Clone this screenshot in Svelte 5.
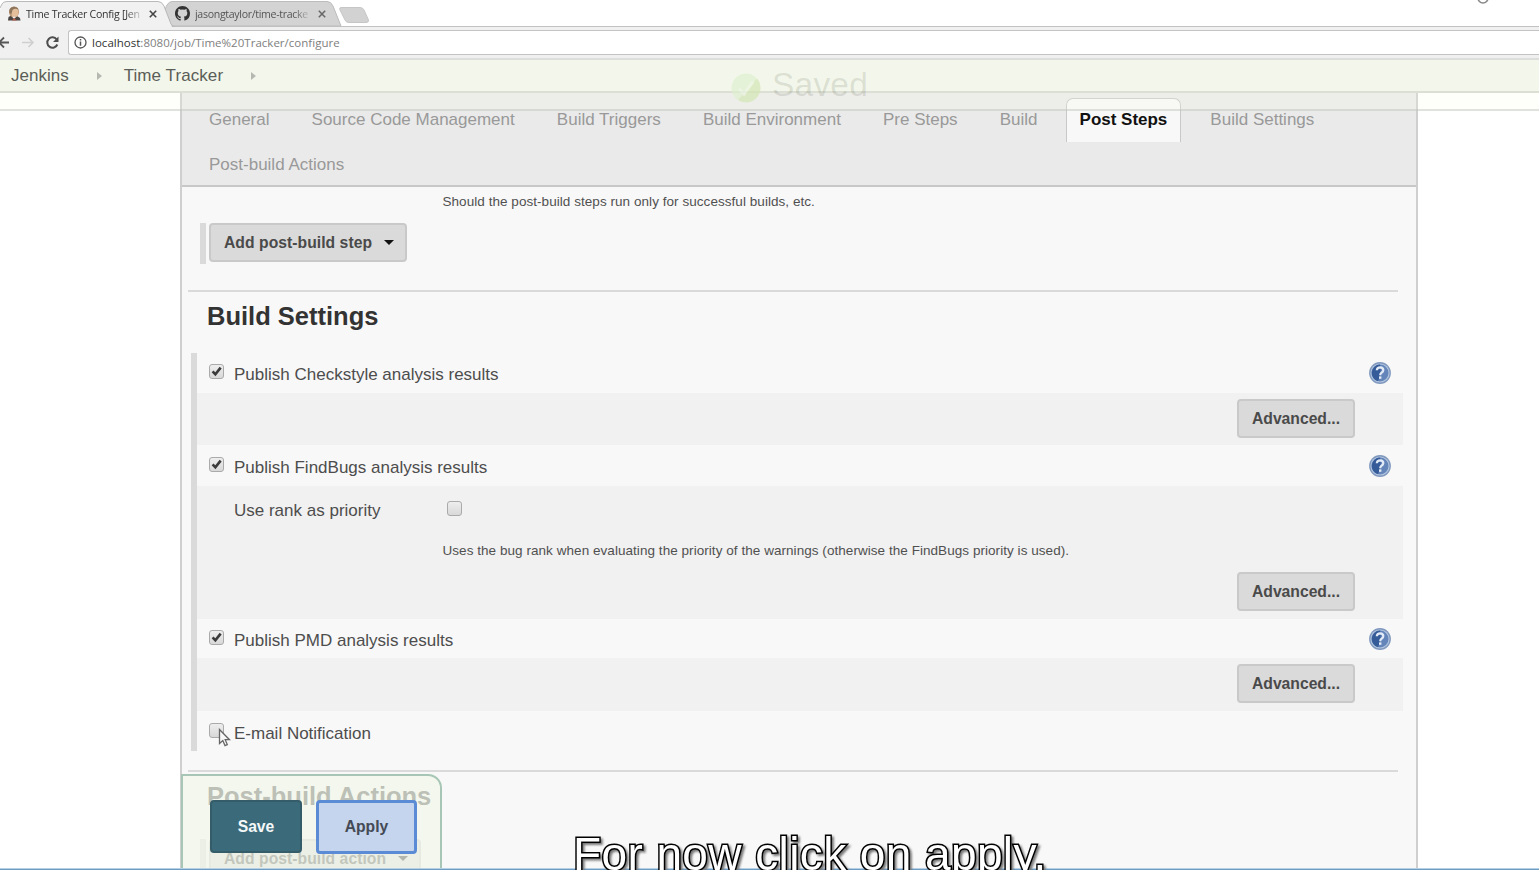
<script>
  const tabs = ['General', 'Source Code Management', 'Build Triggers', 'Build Environment', 'Pre Steps', 'Build', 'Post Steps', 'Build Settings', 'Post-build Actions'];
</script>

{#snippet check(on)}
  <span class="check">
    {#if on}
      <svg viewBox="0 0 15 15"><path d="M3 7.300 6.200 10.800 12.300 3" fill="none" stroke="#3a3a3a" stroke-width="3" /></svg>
    {/if}
  </span>
{/snippet}

{#snippet help()}
  <svg class="help" viewBox="0 0 22 22">
    <circle cx="11" cy="11" r="10.900" fill="#7f98bd" />
    <circle cx="11" cy="11" r="9.600" fill="#b4c6e0" />
    <circle cx="11" cy="11" r="8.500" fill="#6485b9" />
    <path d="M11 2.500A8.500 8.500 0 0 0 9 19.200Q13 11 11 2.500Z" fill="#355b98" />
    <path d="M7.800 8.300Q8 5.300 11.200 5.300 14.400 5.500 14.300 8.200 14.200 9.700 12.500 10.700 11.200 11.500 11.200 13.200" fill="none" stroke="#e3ebf7" stroke-width="2.200" />
    <rect x="10" y="14.400" width="2.400" height="2.400" fill="#e3ebf7" />
  </svg>
{/snippet}

<div class="screen">
  <div class="strip">
    <svg class="shapes" width="1539" height="27" viewBox="0 0 1539 27">
      <path d="M0 26.5H1539" stroke="#c2c2c2" />
      <path d="M171 26 165 10Q167 2 172 1.5H327Q331 1.5 333 6L341 26Z" fill="#d3d3d3" stroke="#bcbcbc" />
      <path d="M341 7.500H360Q363 7.500 364 10L368.500 20Q369 22.500 366 22.500H349Q346 22.500 345 20L340 10Q339 7.500 341 7.500Z" fill="#d2d2d2" stroke="#c6c6c6" />
      <path d="M0 27V10L2 4Q3 1.500 7 1.500H158Q162 1.500 164 6L172 27Z" fill="#f1f1f1" />
      <path d="M0 8 2 4Q3 1.500 7 1.500H158Q162 1.500 164 6L171 24Q172 26.500 175 26.500" fill="none" stroke="#b9b9b9" />
      <circle cx="1483" cy="-2" r="5" fill="none" stroke="#888" stroke-width="1.600" />
    </svg>
    <div class="tab first">
      <svg width="14" height="15" viewBox="0 0 14 15">
        <path d="M1 14.500 1.500 11 5 9 10 10 13 12 13.500 14.500Z" fill="#4a4644" />
        <ellipse cx="7" cy="6" rx="5" ry="5.500" fill="#b5916f" />
        <ellipse cx="7.800" cy="6.600" rx="3.600" ry="4.500" fill="#e3bf9c" />
        <path d="M2.500 7Q1.500 1.500 6.500 .7 10.500 .5 11.500 3.500 8 2 5.500 4L4.500 8Z" fill="#8e765d" />
        <path d="M5 10.500 7 13 9 11" fill="#eee" /><path d="M7 12 10 14.500H5Z" fill="#b5604c" />
      </svg>
      <span class="title t1">Time Tracker Config [Jen</span>
      <svg class="x" width="8" height="8" viewBox="0 0 8 8"><path d="M.8.8 7.200 7.200M7.200.8.8 7.200" stroke="#444" stroke-width="1.600" /></svg>
    </div>
    <div class="tab second">
      <svg width="15" height="15" viewBox="0 0 16 16"><path fill="#333" d="M8 0C3.580 0 0 3.580 0 8c0 3.540 2.290 6.530 5.470 7.590.4.070.55-.17.55-.38 0-.19-.01-.82-.01-1.490-2.010.37-2.530-.49-2.690-.94-.09-.23-.48-.94-.82-1.130-.28-.15-.68-.52-.01-.53.63-.01 1.080.58 1.230.82.72 1.210 1.870.87 2.330.66.07-.52.28-.87.51-1.070-1.780-.2-3.640-.89-3.640-3.950 0-.87.31-1.590.82-2.150-.08-.2-.36-1.020.08-2.120 0 0 .67-.21 2.200.82a7.500 7.500 0 0 1 4 0c1.530-1.040 2.200-.82 2.200-.82.44 1.100.16 1.920.08 2.120.51.56.82 1.270.82 2.150 0 3.070-1.870 3.750-3.650 3.950.29.25.54.73.54 1.480 0 1.070-.01 1.930-.01 2.200 0 .21.15.46.55.38A8 8 0 0 0 16 8c0-4.420-3.580-8-8-8Z" /></svg>
      <span class="title t2">jasongtaylor/time-tracke</span>
      <svg class="x" width="8" height="8" viewBox="0 0 8 8"><path d="M.8.8 7.200 7.200M7.200.8.8 7.200" stroke="#666" stroke-width="1.500" /></svg>
    </div>
  </div>

  <div class="toolbar">
    <svg width="68" height="31" viewBox="0 0 68 31" fill="none">
      <path d="M-2 15.500H9M4 10.500-1 15.500 4 20.500" stroke="#555" stroke-width="1.800" />
      <path d="M22 15.500H33M28.500 11 33 15.500 28.500 20" stroke="#cfcfcf" stroke-width="1.600" />
      <path d="M56.700 12.500A5.200 5.200 0 1 0 57.300 17.500" stroke="#4d4d4d" stroke-width="2" />
      <path d="M58.500 9.500V15H53Z" fill="#4d4d4d" />
    </svg>
    <div class="url">
      <svg width="13" height="13" viewBox="0 0 13 13"><circle cx="6.500" cy="6.500" r="5.500" fill="none" stroke="#555" stroke-width="1.300" /><path d="M6.500 5.600V9.800M6.500 3V4.500" stroke="#555" stroke-width="1.500" /></svg>
      <span class="addr"><b>localhost</b>:8080/job/Time%20Tracker/configure</span>
    </div>
  </div>

  <nav class="crumbs">
    <span>Jenkins</span>
    <i></i>
    <span class="job">Time Tracker</span>
    <i></i>
  </nav>

  <main class="panel">
    <div class="tabs">
      {#each tabs as tab}
        <span class="ptab" class:active={tab === 'Post Steps'}>{tab}</span>
      {/each}
    </div>
    <p class="desc lead">Should the post-build steps run only for successful builds, etc.</p>
    <div class="step"><button class="btn drop">Add post-build step <i></i></button></div>
    <hr />
    <h2>Build Settings</h2>
    <section class="group">
      <div class="row r1">{@render check(true)}<span>Publish Checkstyle analysis results</span>{@render help()}</div>
      <div class="detail d1"><button class="btn">Advanced...</button></div>
      <div class="row r2">{@render check(true)}<span>Publish FindBugs analysis results</span>{@render help()}</div>
      <div class="detail d2">
        <div class="rank"><span>Use rank as priority</span>{@render check(false)}</div>
        <p class="desc">Uses the bug rank when evaluating the priority of the warnings (otherwise the FindBugs priority is used).</p>
        <button class="btn">Advanced...</button>
      </div>
      <div class="row r3">{@render check(true)}<span>Publish PMD analysis results</span>{@render help()}</div>
      <div class="detail d3"><button class="btn">Advanced...</button></div>
      <div class="row r4">{@render check(false)}<span>E-mail Notification</span></div>
    </section>
    <hr class="hr2" />
    <h2 class="post">Post-build Actions</h2>
    <div class="step last"><button class="btn drop">Add post-build action <i></i></button></div>
  </main>

  <div class="saved">
    <svg width="32" height="32" viewBox="0 0 32 32"><circle cx="16" cy="16" r="14.500" fill="#dff0cf" /><path d="M27 6.500A14.500 14.500 0 0 1 8 28Z" fill="#d3e7b4" /><path d="M9 16.500 14 22 23 9.500" fill="none" stroke="#eaf4df" stroke-width="3" /></svg>
    <span>Saved</span>
  </div>

  <div class="sticky">
    <button class="save">Save</button>
    <button class="apply">Apply</button>
  </div>

  <svg class="cursor" width="13" height="20" viewBox="0 0 13 20"><path d="M1.500 1.500V15.500L4.800 12.600 7 17.600 9.300 16.600 7.200 11.700H11.500Z" fill="#f8f8f8" stroke="#666" stroke-width="1.300" /></svg>
  <div class="edge"></div>
  <div class="caption">For now click on apply.</div>
</div>

<style>
  :global(body) { margin: 0; overflow: hidden; }
  .screen { position: relative; width: 1539px; height: 870px; overflow: hidden; background: #fff; font: 17px/20px "Liberation Sans", Arial, sans-serif; color: #4d4d4d; display: flex; flex-direction: column; align-items: stretch; }
  .screen * { box-sizing: border-box; }
  button { font-family: inherit; padding: 0; margin: 0; }
  .strip { position: relative; height: 27px; flex: none; display: flex; align-items: center; }
  .shapes { position: absolute; left: 0; top: 0; }
  .tab { position: relative; display: flex; align-items: center; height: 29px; font: 10.600px/16px "Open Sans", "Noto Sans", sans-serif; color: #333; }
  .first { width: 175px; padding-left: 7px; }
  .title { white-space: nowrap; mask-image: linear-gradient(90deg, #000 86%, rgba(0, 0, 0, .1)); }
  .t1 { width: 116px; margin-left: 5px; letter-spacing: -.25px; }
  .t2 { width: 115px; margin-left: 5px; color: #555; letter-spacing: -.32px; }
  .x { margin-left: 7px; }
  .second .x { margin-left: 8px; }
  .toolbar { height: 33px; flex: none; background: #f0f0f0; border-bottom: 2px solid #dcdedb; display: flex; }
  .url { margin-top: 3px; height: 25px; flex: 1; border: 1px solid #c3c3c3; border-right: 0; border-radius: 3px 0 0 3px; background: #fff; display: flex; align-items: center; gap: 5px; padding-left: 5px; font: 11.500px/16px "Open Sans", "Noto Sans", sans-serif; color: #808080; }
  .addr { letter-spacing: .02px; white-space: nowrap; }
  .addr b { font-weight: 400; color: #333; }
  .crumbs { height: 33px; flex: none; background: #f3f7eb; border-bottom: 2px solid #dcdfd3; display: flex; align-items: center; padding-left: 11px; color: #5b5d58; }
  .crumbs i { width: 0; border: 4.500px solid transparent; border-left: 5px solid #b5b8b0; border-right: 0; margin: 0 22px 0 28px; }
  .job { letter-spacing: .08px; }
  .panel { margin-left: 180px; width: 1238px; height: 777px; flex: none; background: #f8f8f8; border: solid #cfcfcf; border-width: 0 2px; display: flex; flex-direction: column; align-items: stretch; }
  .tabs { height: 94px; flex: none; background: #eaeaea; border-bottom: 2px solid #c8c8c8; padding: 5px 0 0 14px; display: flex; flex-wrap: wrap; align-content: flex-start; color: #999; }
  .ptab { height: 45px; padding: 12px 13px 0; margin-right: 16.100px; white-space: nowrap; }
  .active { height: 44px; padding: 11px 13px 0; margin-left: -1px; background: #f8f8f8; border: 1px solid #c8c8c8; border-bottom: 0; border-radius: 7px 7px 0 0; color: #111; font-weight: 700; letter-spacing: -.02px; }
  .desc { margin: 0; font-size: 13.500px; line-height: 16px; letter-spacing: .05px; white-space: nowrap; color: #505050; }
  .lead { margin: 7px 0 0 260.500px; }
  .step { margin: 13px 0 0 18px; height: 41px; flex: none; border-left: 6px solid #dadada; padding-left: 3px; display: flex; }
  .btn { height: 39px; width: 118px; flex: none; background: #dadada; border: 2px solid #c9c9c9; border-radius: 4px; color: #4a4a4a; font-size: 15.700px; font-weight: 700; line-height: 20px; }
  .drop { width: 198px; display: flex; align-items: center; justify-content: flex-start; padding-left: 13px; gap: 12px; white-space: nowrap; letter-spacing: .04px; }
  .drop i { border: 5px solid transparent; border-top-color: #111; border-bottom: 0; }
  hr { margin: 26px 18px 0 6px; border: 0; height: 2px; flex: none; background: #dadada; }
  h2 { margin: 8px 0 0 25px; font-size: 25.500px; line-height: 32px; color: #333; flex: none; }
  .group { margin: 21px 13px 0 9px; height: 398px; flex: none; border-left: 6px solid #dadada; display: flex; flex-direction: column; }
  .row { flex: none; display: flex; padding-left: 12px; }
  .row > span:nth-child(2) { margin-left: 10px; flex: 1; }
  .check { width: 15px; height: 15px; flex: none; border: 1px solid #aaa; border-radius: 3px; background: linear-gradient(#eee, #d8d8d8); display: flex; }
  .check svg { width: 13px; height: 13px; overflow: visible; }
  .help { width: 22px; height: 22px; margin: -3px 12px 0 0; flex: none; }
  .r1 { height: 40px; padding-top: 12px; }
  .r2 { height: 41px; padding-top: 13px; }
  .r3 { height: 39px; padding-top: 12px; }
  .r4 { height: 39px; padding-top: 13px; }
  .row .check { margin-top: -1px; }
  .detail { background: #f1f1f1; flex: none; display: flex; flex-direction: column; align-items: flex-end; padding: 6px 48px 0 0; }
  .d1 { height: 52px; }
  .d2 { height: 133px; padding-top: 15px; }
  .d3 { height: 53px; }
  .rank { align-self: flex-start; display: flex; padding-left: 37px; }
  .rank span:first-child { width: 213px; }
  .rank .check { margin-top: 0; }
  .d2 .desc { align-self: flex-start; margin: 22px 0 13px 245.500px; }
  .hr2 { margin-top: 19px; }
  .post { margin-top: 8px; }
  .last { margin-top: 27px; }
  .last .drop { width: 212px; }
  .saved { position: absolute; left: 0; right: 0; top: 93px; height: 18px; border-bottom: 2px solid rgba(180, 185, 180, .4); background: rgba(248, 250, 236, .2); display: flex; align-items: center; justify-content: center; gap: 10px; padding-left: 59px; }
  .saved svg { flex: none; margin-top: -27px; opacity: .7; }
  .saved span { font-size: 33.500px; line-height: 40px; margin-top: -32px; color: rgba(90, 100, 80, .16); letter-spacing: .2px; }
  .sticky { position: absolute; left: 181px; top: 774px; width: 261px; height: 100px; border: 2px solid #a8c6b5; border-radius: 0 14px 0 0; background: rgba(241, 246, 233, .72); padding: 24px 0 0 27px; display: flex; gap: 14px; }
  .sticky button { font-size: 15.700px; font-weight: 700; line-height: 20px; border-radius: 4px; }
  .save { width: 92px; height: 53px; background: #3b6b7b; border: 2px solid #345c69; color: #f5f8f8; }
  .apply { width: 101px; height: 54px; background: #c4d5ed; border: 3px solid #5a8bd4; color: #444a56; }
  .cursor { position: absolute; left: 218px; top: 728px; }
  .edge { position: absolute; left: 0; right: 0; bottom: 0; height: 2px; background: #6d9cc5; border-top: 1px solid #b7cfe3; }
  .caption { position: absolute; left: 573px; top: 828px; font-size: 46px; line-height: 52px; letter-spacing: .4px; white-space: nowrap; color: #fff; -webkit-text-stroke: 3px #000; paint-order: stroke fill; filter: drop-shadow(2px 2px 1px #777); }
</style>
